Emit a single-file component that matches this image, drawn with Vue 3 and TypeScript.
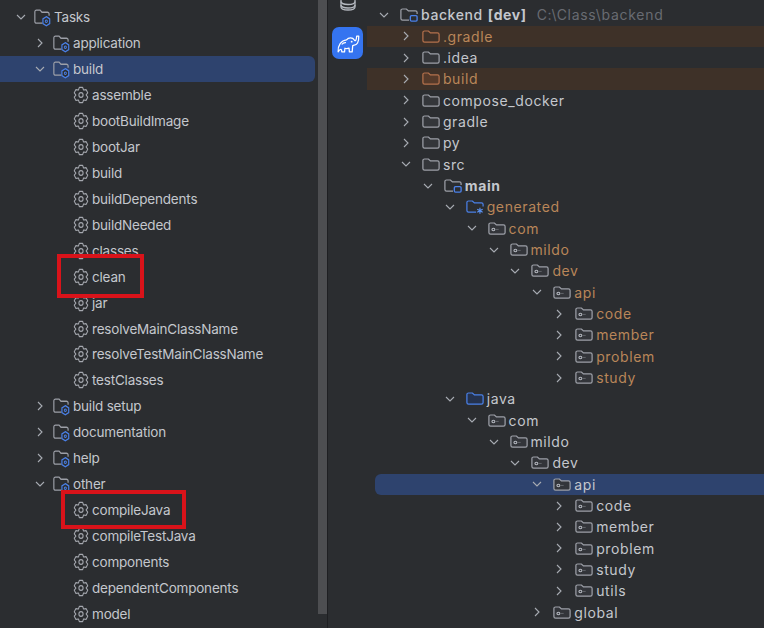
<script setup lang="ts">
interface Row { label: string; level: number; icon: string; arrow?: 'open' | 'closed'; tone?: string; hint?: string; bg?: string; bold?: boolean; suffix?: string }

function gear(): string {
  const c = 8, pts: string[] = []
  for (let i = 0; i < 6; i++) {
    const a = (i * Math.PI) / 3 - Math.PI / 2
    const p = (r: number, o: number) => `${(c + r * Math.cos(a + o)).toFixed(2)} ${(c + r * Math.sin(a + o)).toFixed(2)}`
    pts.push(`${i ? 'L' : 'M'}${p(7, -0.24)}`, `L${p(7, 0.24)}`, `L${p(5.1, 0.52)}`)
  }
  return pts.join(' ') + ' Z'
}
const gearPath = gear()

const tasks: Row[] = [
  { label: 'Tasks', level: 0, icon: 'taskfolder', arrow: 'open' },
  { label: 'application', level: 1, icon: 'taskfolder', arrow: 'closed' },
  { label: 'build', level: 1, icon: 'taskfolder', arrow: 'open', bg: 'sel' },
  ...['assemble', 'bootBuildImage', 'bootJar', 'build', 'buildDependents', 'buildNeeded', 'classes', 'clean', 'jar', 'resolveMainClassName', 'resolveTestMainClassName', 'testClasses']
    .map((label) => ({ label, level: 2, icon: 'gear' })),
  { label: 'build setup', level: 1, icon: 'taskfolder', arrow: 'closed' },
  { label: 'documentation', level: 1, icon: 'taskfolder', arrow: 'closed' },
  { label: 'help', level: 1, icon: 'taskfolder', arrow: 'closed' },
  { label: 'other', level: 1, icon: 'taskfolder', arrow: 'open' },
  ...['compileJava', 'compileTestJava', 'components', 'dependentComponents', 'model']
    .map((label) => ({ label, level: 2, icon: 'gear' })),
]

const pkg = (label: string, level: number, arrow: 'open' | 'closed', tone?: string, bg?: string): Row =>
  ({ label, level, icon: 'package', arrow, tone, bg })

const files: Row[] = [
  { label: 'backend', suffix: '[dev]', hint: 'C:\\Class\\backend', level: 0, icon: 'module', arrow: 'open' },
  { label: '.gradle', level: 1, icon: 'orange', arrow: 'closed', tone: 'orange', bg: 'ex' },
  { label: '.idea', level: 1, icon: 'folder', arrow: 'closed' },
  { label: 'build', level: 1, icon: 'orange2', arrow: 'closed', tone: 'orange', bg: 'ex' },
  { label: 'compose_docker', level: 1, icon: 'folder', arrow: 'closed' },
  { label: 'gradle', level: 1, icon: 'folder', arrow: 'closed' },
  { label: 'py', level: 1, icon: 'folder', arrow: 'closed' },
  { label: 'src', level: 1, icon: 'folder', arrow: 'open' },
  { label: 'main', level: 2, icon: 'module', arrow: 'open', bold: true },
  { label: 'generated', level: 3, icon: 'generated', arrow: 'open', tone: 'orange' },
  pkg('com', 4, 'open', 'orange'),
  pkg('mildo', 5, 'open', 'orange'),
  pkg('dev', 6, 'open', 'orange'),
  pkg('api', 7, 'open', 'orange'),
  pkg('code', 8, 'closed', 'orange'),
  pkg('member', 8, 'closed', 'orange'),
  pkg('problem', 8, 'closed', 'orange'),
  pkg('study', 8, 'closed', 'orange'),
  { label: 'java', level: 3, icon: 'source', arrow: 'open' },
  pkg('com', 4, 'open'),
  pkg('mildo', 5, 'open'),
  pkg('dev', 6, 'open'),
  pkg('api', 7, 'open', undefined, 'sel'),
  pkg('code', 8, 'closed'),
  pkg('member', 8, 'closed'),
  pkg('problem', 8, 'closed'),
  pkg('study', 8, 'closed'),
  pkg('utils', 8, 'closed'),
  pkg('global', 7, 'closed'),
]
const indent = (step: number, base: number, level: number) => ({ paddingLeft: `${base + step * level}px` })
</script>

<template>
  <svg class="defs" aria-hidden="true">
    <defs>
      <symbol id="i-arrow-open" viewBox="0 0 12 12"><path d="M2 4l4 4 4-4" fill="none" stroke="#a8acb3" stroke-width="1.1" /></symbol>
      <symbol id="i-arrow-closed" viewBox="0 0 12 12"><path d="M4 2l4 4-4 4" fill="none" stroke="#a8acb3" stroke-width="1.1" /></symbol>
      <symbol id="i-folder" viewBox="0 0 16 16" preserveAspectRatio="none"><path d="M.8 4.300a1.500 1.500 0 0 1 1.500-1.500h3.400l1.800 1.800h6.200a1.500 1.500 0 0 1 1.500 1.500v5.700a1.500 1.500 0 0 1-1.500 1.500H2.300a1.500 1.500 0 0 1-1.500-1.500z" fill="#34363a" stroke="#9da0a8" stroke-width="1.100" /></symbol>
      <symbol id="i-orange" viewBox="0 0 16 16" preserveAspectRatio="none"><path d="M.8 4.300a1.500 1.500 0 0 1 1.500-1.500h3.400l1.800 1.800h6.200a1.500 1.500 0 0 1 1.500 1.500v5.700a1.500 1.500 0 0 1-1.500 1.500H2.300a1.500 1.500 0 0 1-1.500-1.500z" fill="none" stroke="#b4714c" stroke-width="1.100" /></symbol>
      <symbol id="i-orange2" viewBox="0 0 16 16" preserveAspectRatio="none"><path d="M.8 4.300a1.500 1.500 0 0 1 1.500-1.500h3.400l1.800 1.800h6.200a1.500 1.500 0 0 1 1.500 1.500v5.700a1.500 1.500 0 0 1-1.500 1.500H2.300a1.500 1.500 0 0 1-1.500-1.500z" fill="#553a2a" stroke="#b4714c" stroke-width="1.100" /></symbol>
      <symbol id="i-package" viewBox="0 0 16 16" preserveAspectRatio="none"><path d="M.8 4.300a1.500 1.500 0 0 1 1.500-1.500h3.400l1.800 1.800h6.200a1.500 1.500 0 0 1 1.500 1.500v5.700a1.500 1.500 0 0 1-1.500 1.500H2.300a1.500 1.500 0 0 1-1.500-1.500z" fill="#33353a" stroke="#9da0a8" stroke-width="1.100" /><ellipse cx="4.800" cy="8.900" rx="1.300" ry="1.200" fill="none" stroke="#b4b8bf" stroke-width="1" /><path d="M6.500 8.900h3" stroke="#5d6066" stroke-width="1" /></symbol>
      <symbol id="i-source" viewBox="0 0 16 16" preserveAspectRatio="none"><path d="M.8 4.300a1.500 1.500 0 0 1 1.500-1.500h3.400l1.800 1.800h6.200a1.500 1.500 0 0 1 1.500 1.500v5.700a1.500 1.500 0 0 1-1.500 1.500H2.300a1.500 1.500 0 0 1-1.500-1.500z" fill="#25324d" stroke="#4a80e8" stroke-width="1.100" /></symbol>
      <symbol id="i-generated" viewBox="0 0 16 16" preserveAspectRatio="none"><path d="M9 13.300H2.300a1.500 1.500 0 0 1-1.500-1.500V4.300a1.500 1.500 0 0 1 1.500-1.500h3.400l1.800 1.800h6.200a1.500 1.500 0 0 1 1.500 1.500v2" fill="none" stroke="#4a80e8" stroke-width="1.100" /><path d="M12.400 9.200v5.600M10 10.600l4.800 2.800M14.800 10.600L10 13.400" stroke="#5b93f5" stroke-width="1" /></symbol>
      <symbol id="i-module" viewBox="0 0 16 16" preserveAspectRatio="none"><path d="M8 13.300H2.300a1.500 1.500 0 0 1-1.500-1.500V4.300a1.500 1.500 0 0 1 1.500-1.500h3.400l1.800 1.800h6.200a1.500 1.500 0 0 1 1.500 1.500v1.500" fill="none" stroke="#9da0a8" stroke-width="1.100" /><rect x="9.200" y="9" width="6" height="5.200" rx="1" fill="#2b2d30" stroke="#4a80e8" stroke-width="1.200" /></symbol>
      <symbol id="i-taskfolder" viewBox="0 0 16 16" preserveAspectRatio="none"><path d="M8 12.800H2.300a1.500 1.500 0 0 1-1.500-1.500V3.300a1.500 1.500 0 0 1 1.500-1.500h3.400l1.800 1.800h5.200a1.500 1.500 0 0 1 1.500 1.500v1.500" fill="none" stroke="#9da0a8" stroke-width="1.100" /><path d="M11.600 7.300l3.200 1.900v3.900l-3.200 1.900-3.200-1.900V9.200z" fill="#2b2d30" stroke="#4a80e8" stroke-width="1.100" /><circle cx="11.600" cy="11.150" r="1" fill="none" stroke="#4a80e8" stroke-width=".9" /></symbol>
      <symbol id="i-gear" viewBox="0 0 16 16" preserveAspectRatio="none"><path :d="gearPath" fill="none" stroke="#a4a7ae" stroke-width="1.050" stroke-linejoin="round" /><circle cx="8" cy="8" r="2.100" fill="none" stroke="#a4a7ae" stroke-width="1.050" /></symbol>
    </defs>
  </svg>

  <div class="window">
    <section class="tasks">
      <div v-for="(r, i) in tasks" :key="i" class="row t-row" :class="{ sel: r.bg === 'sel' }" :style="indent(19, 15, r.level)">
        <svg v-if="r.arrow" class="arrow"><use :href="`#i-arrow-${r.arrow}`" /></svg>
        <span v-else class="arrow" />
        <svg class="ico t-ico" :class="{ 'gear-ico': r.icon === 'gear' }"><use :href="`#i-${r.icon}`" /></svg>
        <span class="t-label">{{ r.label }}</span>
      </div>
      <div class="mark mark-clean" />
      <div class="mark mark-compile" />
    </section>
    <div class="scroll"><div class="thumb" /></div>
    <aside class="strip">
      <svg class="db" viewBox="0 0 18 12" aria-hidden="true">
        <path d="M2 -3v10c0 1.800 3.200 3 7 3s7-1.200 7-3V-3" fill="none" stroke="#b4b8bf" stroke-width="1.300" />
        <path d="M2 1.500c0 1.800 3.200 3 7 3s7-1.200 7-3M2 5c0 1.800 3.200 3 7 3s7-1.200 7-3" fill="none" stroke="#b4b8bf" stroke-width="1.300" />
      </svg>
      <div class="gradle">
        <svg viewBox="0 0 24 24" aria-hidden="true">
          <path d="M3 20C2.500 14 6 9 11 8.500C13 6 17 6 18.500 8.500C19.500 10 20.500 9.500 20.800 5L22.800 5C23 11 21 13.500 18.500 13.500L17 14L16.500 20H13.800L13.500 16.500C12 17 10.500 17 9.500 16.500L9.200 20H6.500C6.500 17.500 5.500 16 3 20Z" fill="none" stroke="#fff" stroke-width="1.200" stroke-linejoin="round" />
          <circle cx="16" cy="10.200" r=".9" fill="#fff" />
          <path d="M6.500 13c1-1.400 2.500-2 4-1.800" fill="none" stroke="#fff" stroke-width="1.100" />
        </svg>
      </div>
    </aside>
    <section class="files">
      <div v-for="(r, i) in files" :key="i" class="row f-row" :class="{ sel: r.bg === 'sel', ex: r.bg === 'ex' }" :style="indent(21.9, 11, r.level)">
        <svg class="arrow f-arrow"><use :href="`#i-arrow-${r.arrow}`" /></svg>
        <svg class="ico f-ico"><use :href="`#i-${r.icon}`" /></svg>
        <span class="f-label" :class="[r.tone, { bold: r.bold, medium: r.suffix }]">{{ r.label }}</span>
        <span v-if="r.suffix" class="suffix">{{ r.suffix }}</span>
        <span v-if="r.hint" class="hint">{{ r.hint }}</span>
      </div>
    </section>
  </div>
</template>

<style>
html, body { margin: 0; background: #2b2d30; }
</style>

<style scoped>
.defs { position: absolute; width: 0; height: 0; }
.window { display: flex; width: 764px; height: 628px; overflow: hidden; background: #2b2d30; font-family: Inter, "Noto Sans", sans-serif; color: #c4c7cd; }
.tasks { position: relative; width: 318px; flex: none; padding-top: 4.5px; box-sizing: border-box; }
.row { display: flex; align-items: center; box-sizing: border-box; white-space: nowrap; }
.t-row { height: 25.93px; font-size: 13.5px; letter-spacing: -.2px; }
.t-row.sel { background: #2e436e; border-radius: 0 6px 6px 0; margin-right: 3px; }
.arrow { width: 12px; height: 12px; flex: none; }
.ico { flex: none; width: 17px; height: 17px; }
.t-ico { width: 17px; height: 19px; margin-left: 7px; margin-right: 3px; }
.t-ico.gear-ico { width: 16px; height: 18px; margin-left: 8px; }
.mark { position: absolute; border: 4px solid #d9131a; box-sizing: border-box; }
.mark-clean { left: 57px; top: 254px; width: 87px; height: 44px; }
.mark-compile { left: 61px; top: 490px; width: 125px; height: 39px; }
.scroll { width: 9px; flex: none; background: #2b2d30; }
.thumb { height: 614px; background: #4d4e51; }
.strip { width: 40px; flex: none; border-left: 1px solid #1e1f22; box-sizing: border-box; display: flex; flex-direction: column; align-items: center; }
.db { width: 18px; height: 12px; margin-bottom: 15px; }
.gradle { width: 31px; height: 32px; border-radius: 7px; background: #3574f0; display: flex; align-items: center; justify-content: center; }
.gradle svg { width: 25px; height: 25px; }
.files { flex: 1; padding-top: 4.300px; min-width: 0; }
.f-row { height: 21.33px; font-size: 14px; letter-spacing: .6px; }
.f-row.ex { background: #3e3128; }
.f-row.sel { background: #2e436e; border-radius: 6px 0 0 6px; margin-left: 8px; }
.f-row.sel .f-arrow { margin-left: -8px; }
.f-arrow { margin-right: 10px; }
.f-ico { width: 18px; height: 17px; margin-right: 3px; }
.f-label.orange { color: #b98659; }
.f-label.bold { font-weight: 700; }
.f-label.medium { font-weight: 500; }
.suffix { font-weight: 700; margin-left: 5px; }
.hint { color: #686b72; margin-left: 10px; letter-spacing: .7px; }
</style>
